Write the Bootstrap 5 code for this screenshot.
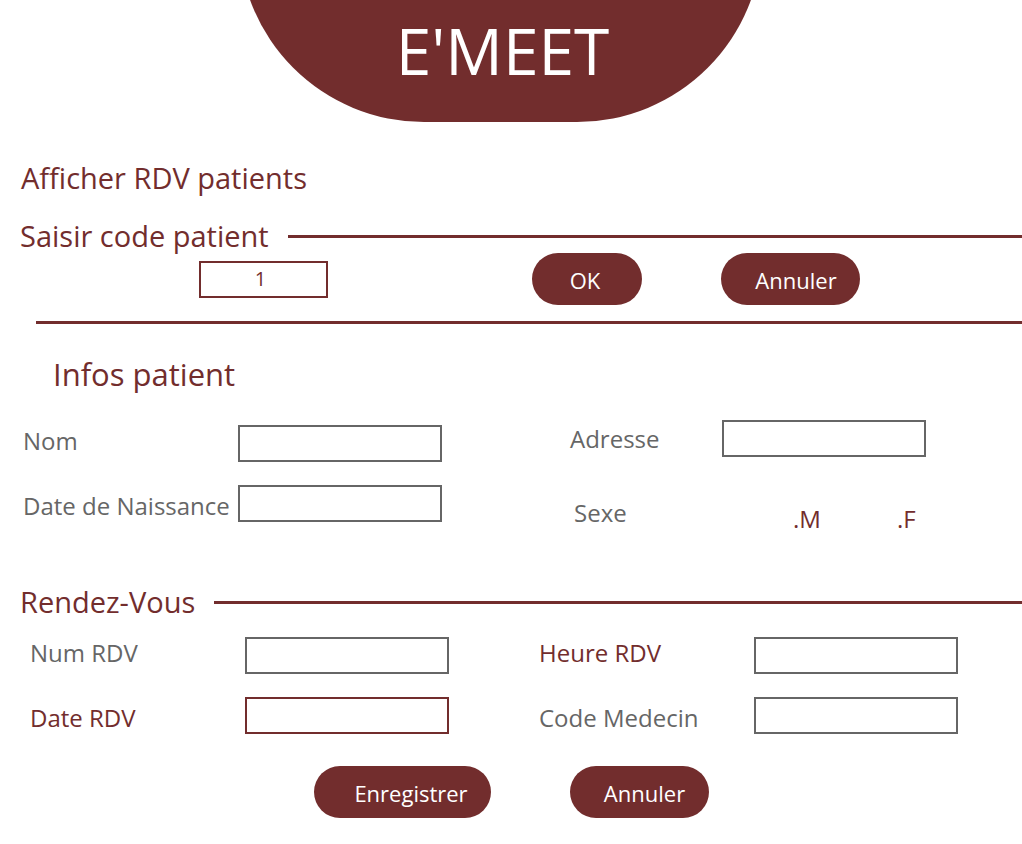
<!DOCTYPE html>
<html lang="fr">
<head>
<meta charset="utf-8">
<meta name="viewport" content="width=device-width, initial-scale=1">
<title>E'MEET</title>
<link rel="stylesheet" href="https://cdn.jsdelivr.net/npm/bootstrap@5.3.0/dist/css/bootstrap.min.css">
<style>
  :root { --wine: #722d2d; --ash: #666; }
  body { font-family: "Trebuchet MS", "Open Sans", "Noto Sans", sans-serif; color: var(--wine); background: #fff; }
  .hat { height: 122px; padding-right: 21px; }
  .hat-shape { width: 523px; height: 370px; border-radius: 185px; background: var(--wine); padding: 0 0 36px 4px; }
  .hat-shape h1 { font-size: 64px; line-height: 70px; font-weight: 500; color: #fff; }
  .page-title { font-size: 29px; line-height: 32px; font-weight: 400; margin: 0; }
  .intro { margin: 40px 0 26px 21px; }
  .section-head { padding-left: 20px; gap: 19px; }
  .rule { height: 3px; background: var(--wine); }
  .rule-full { margin: 16px 0 34px 36px; }
  .infos { margin-left: 53px; font-size: 31px; }
  .search-row { display: grid; grid-template-columns: 333fr 189fr 301fr; padding-left: 199px; margin-top: 1px; align-items: center; }
  .box { height: 37px; width: 204px; border: 2px solid var(--ash); border-radius: 0; padding: 0 8px; color: var(--wine); font-size: 20px; }
  .box:focus { color: var(--wine); }
  .box-wine { border-color: var(--wine); }
  .box-code { width: 129px; padding: 0 14px 2px 8px; }
  .pill { height: 52px; border: 0; border-radius: 26px; background: var(--wine); color: #fff; font-size: 22px; line-height: 30px; padding: 2px 0 0; }
  .pill:hover { background: #5c2323; color: #fff; }
  .pill-ok { width: 110px; padding-right: 4px; }
  .pill-md { width: 139px; padding-left: 11px; }
  .pill-lg { width: 177px; padding-left: 18px; }
  .duo { display: grid; }
  .duo-patient { grid-template-columns: 547fr 452fr; padding-left: 23px; margin-top: 30px; }
  .duo-rdv { grid-template-columns: 509fr 483fr; padding-left: 30px; margin-top: 19px; }
  .fields { display: grid; grid-template-columns: 215px 1fr; grid-auto-rows: 37px; row-gap: 23px; align-content: start; align-items: end; }
  .fields > .tag:first-child { align-self: start; }
  .fields-low { padding-top: 5px; }
  .fields-wide { grid-template-columns: 152px 1fr; row-gap: 37px; align-items: center; }
  .fields-wide > .tag:first-child { align-self: center; }
  .tag { font-size: 24px; line-height: 32px; color: var(--ash); white-space: nowrap; }
  .tag-wine { color: var(--wine); }
  .sexe { gap: 76px; padding: 12px 0 0 71px; }
  .rdv-head { margin-top: 55px; }
  .actions { gap: 79px; margin-top: 32px; padding-bottom: 26px; }
</style>
</head>
<body>
<header class="hat d-flex justify-content-center align-items-end overflow-hidden">
  <div class="hat-shape d-flex flex-shrink-0 justify-content-center align-items-end">
    <h1 class="m-0">E'MEET</h1>
  </div>
</header>
<main>
  <h2 class="page-title intro">Afficher RDV patients</h2>
  <form>
    <div class="section-head d-flex align-items-center">
      <label class="page-title" for="code">Saisir code patient</label>
      <div class="rule flex-grow-1"></div>
    </div>
    <div class="search-row">
      <input class="form-control box box-wine box-code text-center" id="code" type="text" value="1">
      <button class="btn pill pill-ok" type="button">OK</button>
      <button class="btn pill pill-md" type="button">Annuler</button>
    </div>
  </form>
  <div class="rule rule-full"></div>
  <form>
    <h2 class="page-title infos">Infos patient</h2>
    <div class="duo duo-patient">
      <div class="fields fields-low">
        <label class="tag" for="nom">Nom</label>
        <input class="form-control box" id="nom" type="text">
        <label class="tag" for="naissance">Date de Naissance</label>
        <input class="form-control box" id="naissance" type="text">
      </div>
      <div class="fields fields-wide">
        <label class="tag" for="adresse">Adresse</label>
        <input class="form-control box" id="adresse" type="text">
        <span class="tag ps-1" id="sexe">Sexe</span>
        <div class="sexe d-flex" role="radiogroup" aria-labelledby="sexe">
          <div><input class="btn-check" type="radio" name="sexe" id="m"><label class="tag tag-wine" for="m">.M</label></div>
          <div><input class="btn-check" type="radio" name="sexe" id="f"><label class="tag tag-wine" for="f">.F</label></div>
        </div>
      </div>
    </div>
    <div class="section-head rdv-head d-flex align-items-center">
      <h2 class="page-title">Rendez-Vous</h2>
      <div class="rule flex-grow-1"></div>
    </div>
    <div class="duo duo-rdv">
      <div class="fields">
        <label class="tag" for="num">Num RDV</label>
        <input class="form-control box" id="num" type="text">
        <label class="tag tag-wine" for="date">Date RDV</label>
        <input class="form-control box box-wine" id="date" type="text">
      </div>
      <div class="fields">
        <label class="tag tag-wine" for="heure">Heure RDV</label>
        <input class="form-control box" id="heure" type="text">
        <label class="tag" for="medecin">Code Medecin</label>
        <input class="form-control box" id="medecin" type="text">
      </div>
    </div>
    <div class="actions d-flex justify-content-center">
      <button class="btn pill pill-lg" type="submit">Enregistrer</button>
      <button class="btn pill pill-md" type="reset">Annuler</button>
    </div>
  </form>
</main>
<script src="https://cdn.jsdelivr.net/npm/bootstrap@5.3.0/dist/js/bootstrap.bundle.min.js"></script>
</body>
</html>
